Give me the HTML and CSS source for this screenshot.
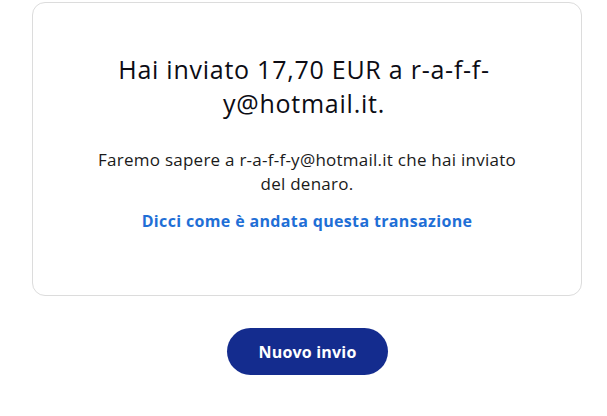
FILE: index.html
```html
<!DOCTYPE html>
<html lang="it">
<head>
<meta charset="utf-8">
<link rel="stylesheet" href="styles.css">
</head>
<body>
<main class="page">
  <section class="card">
    <h1 class="title">Hai inviato 17,70 EUR a r-a-f-f-y@hotmail.it.</h1>
    <p class="desc">Faremo sapere a r-a-f-f-y@hotmail.it che hai inviato del denaro.</p>
    <a class="link" href="#">Dicci come è andata questa transazione</a>
  </section>
  <div class="actions">
    <button class="btn" type="button">Nuovo invio</button>
  </div>
</main>
</body>
</html>
```
FILE: styles.css
```css
* { box-sizing: border-box; }
html, body { margin: 0; padding: 0; background: #fff; }
body { font-family: "Open Sans", sans-serif; }
.page {
  width: 550px;
  margin-left: 32px;
  padding-top: 2px;
}
.card {
  border: 1px solid #dcdcdc;
  border-radius: 13px;
  height: 294px;
  padding: 49px 55px 0;
  display: flex;
  flex-direction: column;
  align-items: center;
  text-align: center;
}
.title {
  margin: 0 6px 0 0;
  font-weight: 400;
  font-size: 25px;
  letter-spacing: 0.75px;
  line-height: 34px;
  color: #0c0c14;
}
.desc {
  margin: 28px 0 0;
  font-size: 17px;
  letter-spacing: 0.25px;
  line-height: 24px;
  color: #1a1a1a;
}
.link {
  margin-top: 13px;
  font-size: 16px;
  font-weight: 700;
  letter-spacing: 0.35px;
  line-height: 24px;
  color: #1f6fd6;
  text-decoration: none;
}
.actions {
  display: flex;
  justify-content: center;
  padding-top: 32px;
  padding-left: 1px;
}
.btn {
  width: 161px;
  height: 47px;
  border: none;
  border-radius: 24px;
  background: #142c8e;
  color: #fff;
  font-family: inherit;
  font-size: 16px;
  font-weight: 700;
  letter-spacing: 0.2px;
}
```
